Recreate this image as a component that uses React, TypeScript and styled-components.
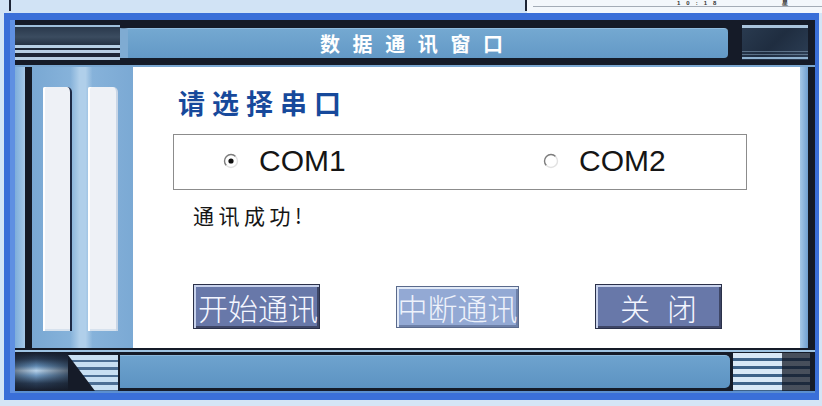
import React from "react";
import styled, { createGlobalStyle } from "styled-components";

const Global = createGlobalStyle`
  html, body { margin: 0; padding: 0; background: #d4e5f6; }
  body { font-family: "Noto Sans CJK SC", "Liberation Sans", sans-serif; }
`;

const Page = styled.div`
  width: 822px;
  height: 406px;
  overflow: hidden;
  display: flex;
  flex-direction: column;
  background: #d4e5f6;
`;

/* ---------- top strip (parts of the window behind) ---------- */
const TopStrip = styled.div`
  height: 13px;
  flex-shrink: 0;
  display: flex;
  background: #d1e3f5;
`;
const TopLeftPane = styled.div`
  margin-left: 9px;
  width: 514px;
  height: 11px;
  border-left: 2px solid #1d2535;
  border-right: 2px solid #1d2535;
  background: #d1e3f5;
`;
const TopRightPane = styled.div`
  flex: 1;
  background: #f3f7fb;
  padding-left: 6px;
`;
const ClockRow = styled.div`
  height: 6px;
  border-bottom: 1px solid #a4acb6;
  display: flex;
  align-items: flex-start;
  gap: 60px;
  padding-left: 144px;
`;
const ClockText = styled.span`
  font-family: "Liberation Sans", sans-serif;
  font-size: 6px;
  line-height: 6px;
  color: #333;
  letter-spacing: 6px;
  font-weight: bold;
`;

/* ---------- dialog frame ---------- */
const Window = styled.div`
  margin: 0 3px 0 4px;
  height: 387px;
  box-sizing: border-box;
  border-style: solid;
  border-color: #3a6fd8;
  border-width: 7px 4px 7px 6px;
  padding: 5px 0 0 5px;
  background: #151b28;
  box-shadow: inset 5px 0 0 #5f90e2;
  display: flex;
  flex-direction: column;
`;

const Header = styled.div`
  height: 40px;
  display: grid;
  grid-template-columns: 105px 615px 73px;
  justify-content: start;
  align-items: start;
`;
const HeaderLeftDeco = styled.div`
  height: 35px;
  background: linear-gradient(
    to bottom,
    #9fc0dc 0 2px,
    #2a394c 2px,
    #3b4c60 12px,
    #253244 20px,
    #b7cfe4 20px 23px,
    #1d2636 23px 25px,
    #b7cfe4 25px 28px,
    #1d2636 28px 32px,
    #b7cfe4 32px 35px
  );
`;
const TitleBar = styled.div`
  margin-top: 3px;
  height: 30px;
  box-sizing: border-box;
  border-left: 8px solid #7fabd2;
  border-top: 1px solid #90bde0;
  border-radius: 0 4px 4px 0;
  background: linear-gradient(to bottom, #74a8d1, #6399c6);
  display: flex;
  align-items: center;
  padding-left: 192px;
  color: #ffffff;
  font-size: 20px;
  font-weight: bold;
  letter-spacing: 12.6px;
  line-height: 1;
  margin-right: 7px;
`;
const HeaderRightDeco = styled.div`
  margin-left: 7px;
  height: 35px;
  background:
    linear-gradient(
      to bottom,
      #a9c4dc 0 3px,
      transparent 3px 26px,
      rgba(160, 190, 215, 0.45) 26px 27px,
      transparent 27px 29px,
      rgba(160, 190, 215, 0.45) 29px 30px,
      transparent 30px 32px,
      #8fb2d0 32px 34px,
      transparent 34px
    ),
    linear-gradient(135deg, #2a3b50, #1f2d40 50%, #2c3e55);
`;

const Body = styled.div`
  height: 285px;
  box-sizing: border-box;
  border-top: 2px solid #7aa7d1;
  padding-bottom: 2px;
  display: grid;
  grid-template-columns: 10px 7px 101px 667px 8px 7px;
`;
const SideStrip = styled.div<{ $tone: "light" | "dark" }>`
  background: ${(p) =>
    p.$tone === "light"
      ? "linear-gradient(to right, #7eaedb, #a5c8e8)"
      : "#141a26"};
`;
const LeftPanel = styled.div`
  background: linear-gradient(
    to right,
    #79a8d3 0,
    #86b2da 38%,
    #b0cfea 47%,
    #b0cfea 53%,
    #86b2da 60%,
    #7ba9d4 100%
  );
  padding: 20px 15px 17px 11px;
  display: flex;
  gap: 16px;
`;
const LightBar = styled.div<{ $shadow: boolean }>`
  flex: 0 0 ${(p) => (p.$shadow ? "29px" : "30px")};
  box-sizing: border-box;
  background: #eef1f6;
  border-radius: 2px 5px 0 0;
  border-right: 2px solid ${(p) => (p.$shadow ? "#1d2a46" : "#c9d6e6")};
  box-shadow: inset 2px 0 0 #ffffff, inset 0 -2px 0 #d7e2ee;
`;
const RightStrip = styled.div`
  background: linear-gradient(to right, #a6c9e8, #6f9fd0);
`;

/* ---------- content ---------- */
const Content = styled.div`
  background: #ffffff;
  display: flex;
  flex-direction: column;
  padding: 21px 0 0 40px;
  box-sizing: border-box;
`;
const Heading = styled.div`
  margin-left: 5px;
  height: 30px;
  line-height: 30px;
  font-size: 27px;
  font-weight: bold;
  letter-spacing: 7px;
  color: #17499b;
`;
const GroupBox = styled.div`
  margin-top: 16px;
  width: 574px;
  height: 56px;
  box-sizing: border-box;
  border: 1px solid #8c8c8c;
  display: flex;
  align-items: center;
  padding: 0 0 3px 49px;
`;
const RadioItem = styled.label<{ $width: number }>`
  width: ${(p) => p.$width}px;
  display: flex;
  align-items: center;
  gap: 20px;
  font-family: "Liberation Sans", "Noto Sans", sans-serif;
  font-size: 30px;
  color: #151515;
  line-height: 1;
`;
const Status = styled.div`
  margin: 12px 0 0 20px;
  height: 26px;
  line-height: 26px;
  font-size: 21px;
  letter-spacing: 4.5px;
  color: #151515;
`;
const ButtonRow = styled.div`
  margin: 56px 0 0 20px;
  display: grid;
  grid-template-columns: 127px 123px 127px;
  column-gap: 76px;
  align-items: center;
`;
const Btn = styled.div<{ $variant: "normal" | "disabled"; $spread: number; $align: "left" | "center" }>`
  height: ${(p) => (p.$variant === "disabled" ? "42px" : "45px")};
  box-sizing: border-box;
  overflow: hidden;
  white-space: nowrap;
  display: flex;
  align-items: center;
  justify-content: ${(p) => (p.$align === "left" ? "flex-start" : "center")};
  padding-left: ${(p) => (p.$align === "left" ? "4px" : `${p.$spread}px`)};
  font-size: 30px;
  font-weight: 300;
  letter-spacing: ${(p) => p.$spread}px;
  color: ${(p) => (p.$variant === "disabled" ? "#eef2fb" : "#f4f6ff")};
  background: ${(p) => (p.$variant === "disabled" ? "#93a9d4" : "#6878a9")};
  border: 1px solid ${(p) => (p.$variant === "disabled" ? "#5a6a8c" : "#2b3149")};
  box-shadow: inset 2px 2px 0 ${(p) => (p.$variant === "disabled" ? "#e3ebf8" : "#c9d3ec")},
    inset -2px -2px 0 ${(p) => (p.$variant === "disabled" ? "#6d80a8" : "#3e4666")};
`;

/* ---------- footer ---------- */
const Footer = styled.div`
  height: 43px;
  box-sizing: border-box;
  border-top: 2px solid #9ec3e2;
  border-bottom: 2px solid #5b8fd0;
  display: grid;
  grid-template-columns: 53px 50px 615px 77px;
  justify-content: start;
`;
const Cylinder = styled.div`
  background:
    linear-gradient(to right, rgba(20, 26, 38, 0.45), transparent 40%, rgba(20, 26, 38, 0.6)),
    linear-gradient(
      to bottom,
      #161c2a 0%,
      #2a3d56 18%,
      #5f89b2 36%,
      #b9d3ea 48%,
      #6f98c0 60%,
      #2a3d56 80%,
      #161c2a 100%
    );
`;
const Stairs = styled.div`
  margin-top: 3px;
  clip-path: polygon(0 0, 100% 0, 100% 100%, 54% 100%);
  background: repeating-linear-gradient(
    to bottom,
    #c8dff2 0 5px,
    #4d6f94 5px 7.5px
  );
`;
const FooterBar = styled.div`
  margin: 3px 3px 3px 2px;
  border-top: 1px solid #8ab7dc;
  border-radius: 0 5px 5px 0;
  background: linear-gradient(to bottom, #6ea3ce, #5c93c2);
`;
const FooterRightDeco = styled.div`
  margin-top: 1px;
  background:
    linear-gradient(to right, transparent 0 49px, rgba(15, 20, 32, 0.72) 49px),
    repeating-linear-gradient(to bottom, #d9e8f6 0 5px, #3e6288 5px 8px);
`;

const RadioIcon: React.FC<{ checked: boolean }> = ({ checked }) => (
  <svg width="16" height="16" viewBox="0 0 16 16" aria-hidden>
    <circle cx="8" cy="8" r="6.5" fill="#ffffff" />
    <path d="M3.4 12.6 A6.5 6.5 0 0 1 12.6 3.4" stroke="#7c7c7c" strokeWidth="1.4" fill="none" />
    <path d="M12.6 3.4 A6.5 6.5 0 0 1 3.4 12.6" stroke="#e2e2e2" strokeWidth="1.4" fill="none" />
    {checked && <circle cx="8" cy="8" r="2.6" fill="#111111" />}
  </svg>
);

export default function App() {
  return (
    <Page>
      <Global />
      <TopStrip>
        <TopLeftPane />
        <TopRightPane>
          <ClockRow>
            <ClockText>10:18</ClockText>
            <ClockText>星</ClockText>
          </ClockRow>
        </TopRightPane>
      </TopStrip>
      <Window>
        <Header>
          <HeaderLeftDeco />
          <TitleBar>数据通讯窗口</TitleBar>
          <HeaderRightDeco />
        </Header>
        <Body>
          <SideStrip $tone="light" />
          <SideStrip $tone="dark" />
          <LeftPanel>
            <LightBar $shadow />
            <LightBar $shadow={false} />
          </LeftPanel>
          <Content>
            <Heading>请选择串口</Heading>
            <GroupBox>
              <RadioItem $width={320}>
                <RadioIcon checked />
                COM1
              </RadioItem>
              <RadioItem $width={200}>
                <RadioIcon checked={false} />
                COM2
              </RadioItem>
            </GroupBox>
            <Status>通讯成功!</Status>
            <ButtonRow>
              <Btn $variant="normal" $spread={0} $align="left">开始通讯</Btn>
              <Btn $variant="disabled" $spread={0} $align="center">中断通讯</Btn>
              <Btn $variant="normal" $spread={17} $align="center">关闭</Btn>
            </ButtonRow>
          </Content>
          <RightStrip />
          <SideStrip $tone="dark" />
        </Body>
        <Footer>
          <Cylinder />
          <Stairs />
          <FooterBar />
          <FooterRightDeco />
        </Footer>
      </Window>
    </Page>
  );
}
